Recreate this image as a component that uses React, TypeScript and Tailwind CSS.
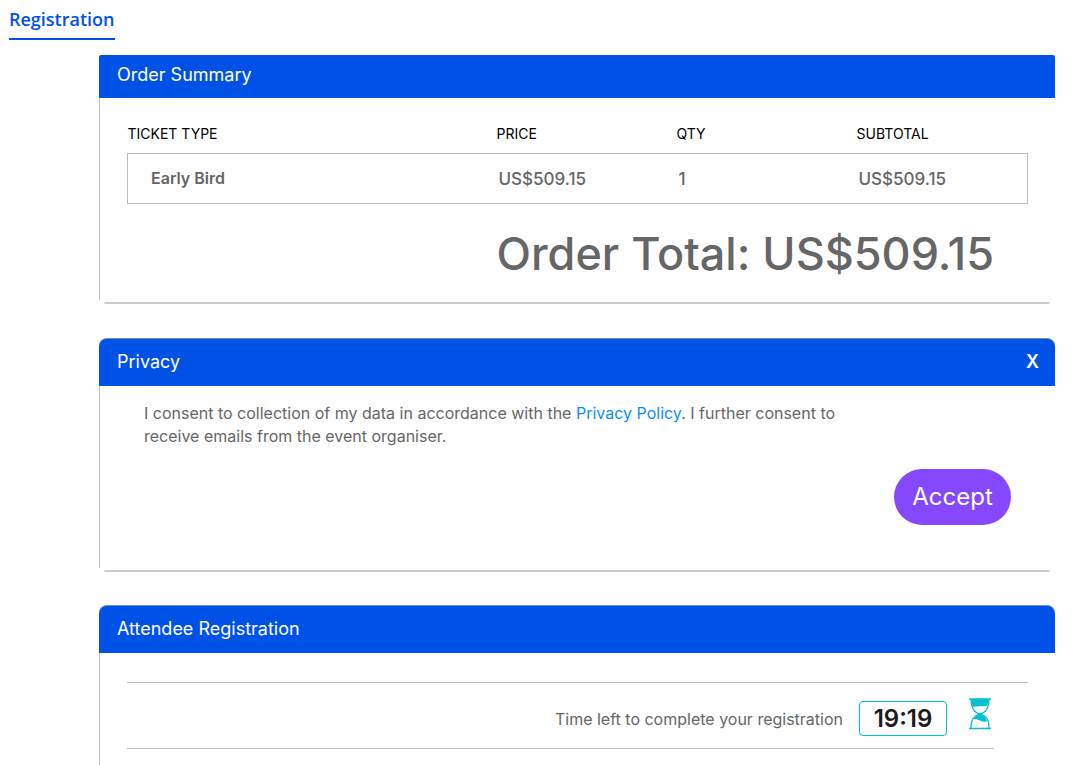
import type { ReactNode } from "react";

const tickets = [
  { type: "Early Bird", price: "US$509.15", qty: 1, subtotal: "US$509.15" },
];

function PanelEnd() {
  return <div className="mx-[5px] h-1 rounded-b-xs border-b-2 border-[#c9cdd3]" />;
}

function PanelHeader({ title, children }: { title: string; children?: ReactNode }) {
  return (
    <div className="flex h-12 items-center justify-between rounded-t-lg border-t border-[#6f8fc4] bg-[#0052e6] pr-4 pb-px pl-[18px] text-white">
      <h2 className="text-lg">{title}</h2>
      {children}
    </div>
  );
}

function Hourglass() {
  return (
    <svg viewBox="0 0 22 32" className="h-8 w-[22px]" fill="none" stroke="#00c1d0" aria-hidden="true">
      <path d="M0 1h22M0 30.5h22" strokeWidth="1.5" />
      <path
        d="M2 1C2 9 4 13 8.5 15.2Q11 16.3 13.5 15.2C18 13 20 9 20 1M2 30.5C2 22 4 19 8.5 16.8Q11 15.8 13.5 16.8C18 19 20 22 20 30.5"
        strokeWidth="1.3"
      />
      <path d="M2 1H19.5L18.5 7.5Q15 8.5 11 8.2Q7 8 3.5 9Z" fill="#00c1d0" stroke="none" />
      <path d="M4 21Q7 17 11 16.2Q16.5 17.5 18 23.5Q14 24.5 11 22.5Q8 20.5 4 21Z" fill="#00c1d0" stroke="none" />
    </svg>
  );
}

export default function App() {
  return (
    <div className="flex min-h-screen flex-col bg-white font-['Inter',sans-serif] text-[#666]">
      <nav className="flex h-[55px] px-[9px]">
        <a
          href="#registration"
          className="h-10 border-b-2 border-[#0052e6] pt-[7px] font-['Open_Sans',sans-serif] text-lg leading-6 font-semibold text-[#0052e6]"
        >
          Registration
        </a>
      </nav>

      <main className="mr-[25px] ml-[99px] flex flex-1 flex-col">
        <section className="mb-[34px]">
          <div className="flex h-[43px] items-center rounded-t-xs bg-[#0052e6] pb-1 pl-[18px] text-white">
            <h2 className="text-lg">Order Summary</h2>
          </div>
          <div className="h-[202px] border-l border-[#b9bec6] pt-5 pr-[27px] pl-[27px]">
            <table className="w-full table-fixed border-collapse text-left">
              <thead>
                <tr className="h-[35px] text-sm text-black">
                  <th className="w-2/5 pb-0.5 font-normal">TICKET TYPE</th>
                  <th className="w-1/5 pb-0.5 pl-[9px] font-normal">PRICE</th>
                  <th className="w-1/5 pb-0.5 pl-[9px] font-normal">QTY</th>
                  <th className="w-1/5 pb-0.5 pl-[9px] font-normal">SUBTOTAL</th>
                </tr>
              </thead>
              <tbody>
                {tickets.map((ticket) => (
                  <tr key={ticket.type} className="h-[50px] border border-[#b9bbbe] text-[17px] font-medium">
                    <td className="pl-[23px] text-base font-semibold">{ticket.type}</td>
                    <td className="pt-1 pl-[11px]">{ticket.price}</td>
                    <td className="pt-1 pl-[11px]">{ticket.qty}</td>
                    <td className="pt-1 pl-[11px]">{ticket.subtotal}</td>
                  </tr>
                ))}
              </tbody>
            </table>
            <p className="mt-5 pr-[34px] text-right text-[45px] leading-[60px] font-medium">
              Order Total: US$509.15
            </p>
          </div>
          <PanelEnd />
        </section>

        <section className="mb-[34px]">
          <PanelHeader title="Privacy">
            <button type="button" aria-label="Close" className="text-lg font-semibold">
              X
            </button>
          </PanelHeader>
          <div className="h-[182px] border-l border-[#b9bec6] pt-4 pr-11 pl-11">
            <p className="max-w-[710px] text-base leading-[23px]">
              I consent to collection of my data in accordance with the{" "}
              <a href="#privacy" className="text-[#0d8ff2]">
                Privacy Policy
              </a>
              . I further consent to receive emails from the event organiser.
            </p>
            <div className="mt-[21px] flex justify-end">
              <button type="button" className="h-14 w-[117px] rounded-full bg-[#8548ff] text-2xl text-white">
                Accept
              </button>
            </div>
          </div>
          <PanelEnd />
        </section>

        <section className="-mt-px flex flex-1 flex-col">
          <PanelHeader title="Attendee Registration" />
          <div className="flex-1 border-l border-[#b9bec6] pt-[29px] pr-[27px] pl-[27px]">
            <div className="border-t border-[#bcbcca]">
              <div className="mr-[34px] flex h-[66px] items-center justify-end border-b border-[#bcbcca]">
                <span className="pt-1.5 text-base">Time left to complete your registration</span>
                <span className="mt-1.5 ml-4 flex h-[35px] w-[88px] items-center justify-center rounded-sm border border-[#00c1d0] text-2xl font-semibold text-[#1c1c1c]">
                  19:19
                </span>
                <span className="mr-[3px] mb-1 ml-[22px]">
                  <Hourglass />
                </span>
              </div>
            </div>
          </div>
        </section>
      </main>
    </div>
  );
}
